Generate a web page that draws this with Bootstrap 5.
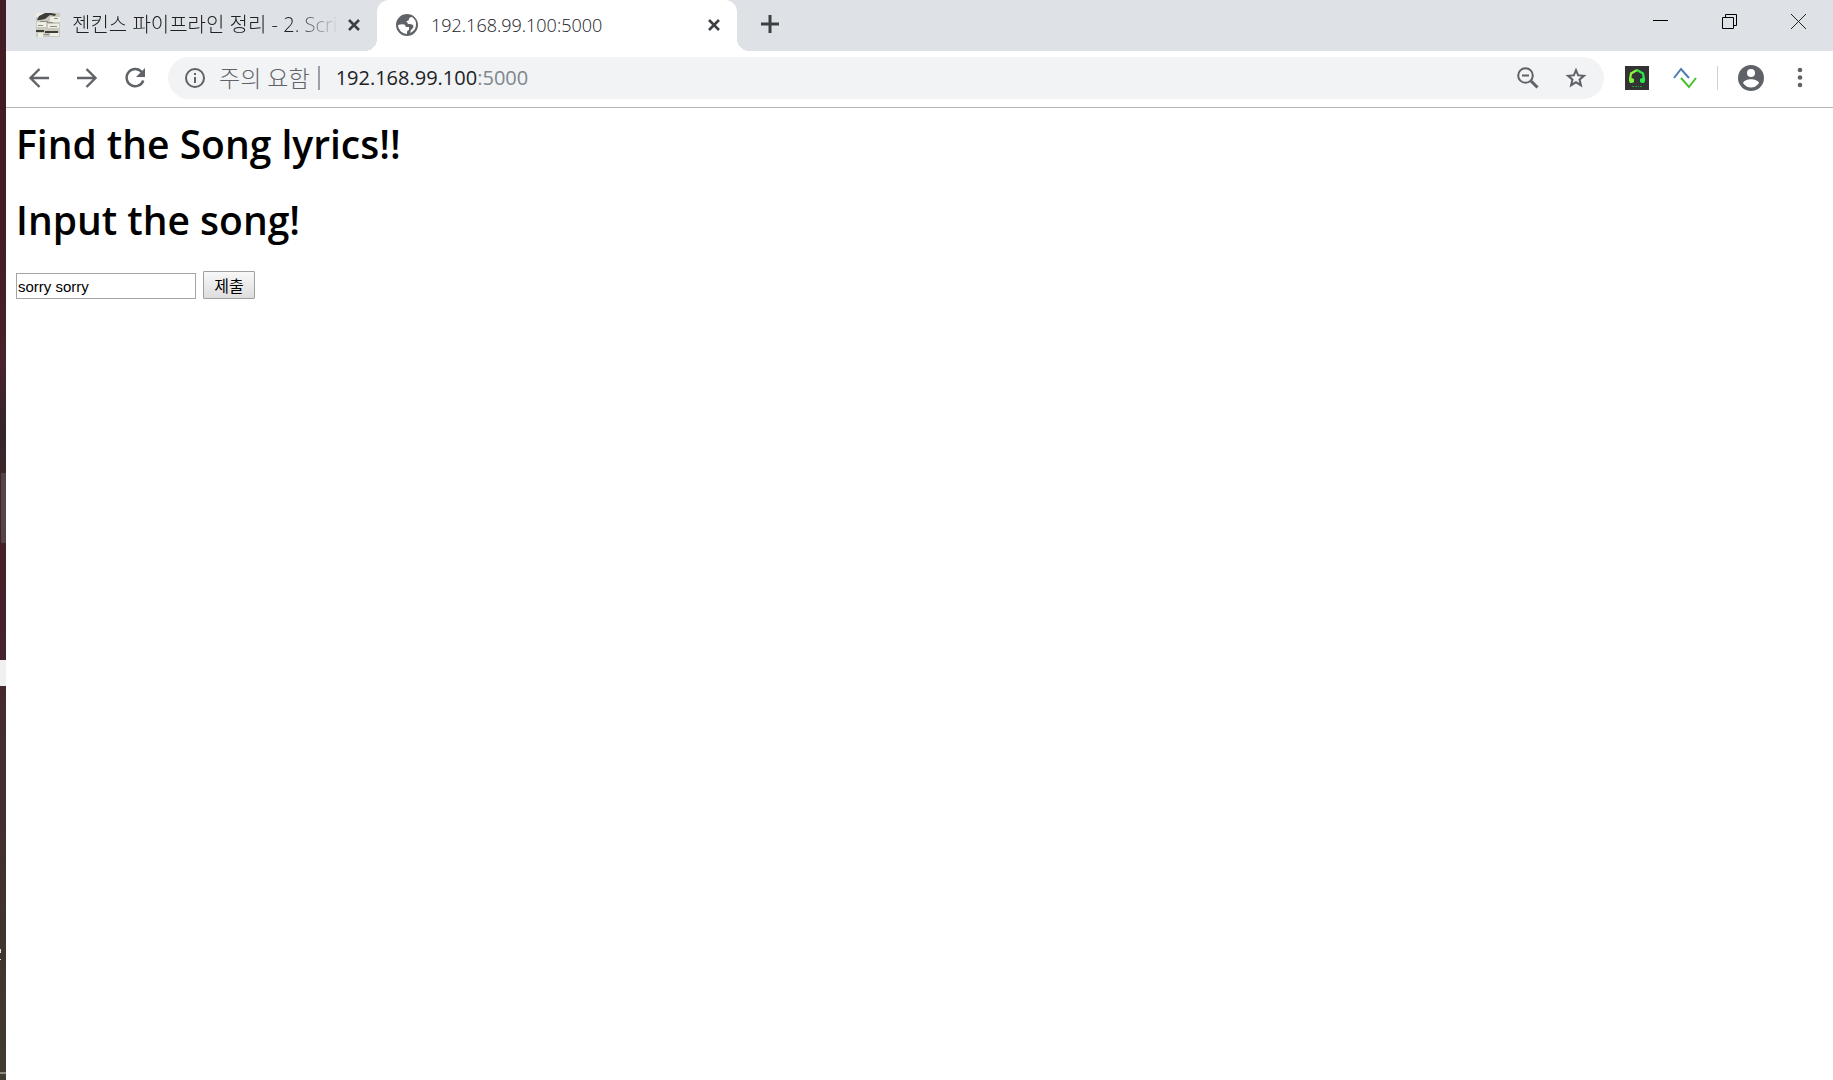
<!DOCTYPE html>
<html lang="ko">
<head>
<meta charset="utf-8">
<meta name="viewport" content="width=device-width, initial-scale=1">
<title>192.168.99.100:5000</title>
<link rel="stylesheet" href="https://cdn.jsdelivr.net/npm/bootstrap@5.3.0/dist/css/bootstrap.min.css">
<style>
body{font-family:"Open Sans","Noto Sans CJK KR",sans-serif;color:#000}
svg{display:block;flex-shrink:0}
button{background:none;border:0;padding:0}
/* sliver of the desktop behind the window */
.desk{width:6px;background:linear-gradient(#431d24 0,#431d24 22%,#48222c 34%,#33252a 40%,#3c272a 44%,#452028 50%,#45202b 58%,#452b2f 66%,#42302e 80%,#3f352f 88%,#413b32 100%)}
.desk svg{width:6px;height:100%}
.tabstrip{height:51px;background:#dee1e6;padding-left:12px}
.tab{width:359px;height:51px;font-size:18px;font-weight:300;color:#202124;padding:0 17px 2px 18px}
.tab-on{position:relative;width:360px;background:#fff;border-radius:12px 12px 0 0}
.tab-on::before,.tab-on::after{content:"";position:absolute;bottom:0;width:12px;height:12px}
.tab-on::before{right:100%;background:radial-gradient(circle at 0 0,transparent 12px,#fff 12px)}
.tab-on::after{left:100%;background:radial-gradient(circle at 100% 0,transparent 12px,#fff 12px)}
.tab-text{margin-left:12px;line-height:28px;white-space:nowrap;flex:1}
.tab-fade{-webkit-mask-image:linear-gradient(90deg,#000 82%,transparent);mask-image:linear-gradient(90deg,#000 82%,transparent)}
.ko-title{font-size:20px}
.wctl button{width:69px;height:43px;display:flex;align-items:center;justify-content:center}
.toolbar{height:57px;background:#fff;border-bottom:1px solid #b4b4b4;padding:0 21px 2px;color:#5f6368}
.omni{height:42px;background:#f1f3f4;border-radius:21px;padding:0 16px 0 17px;margin:0 21px}
.warn{font-size:23px;font-weight:300;line-height:30px;margin-left:14px}
.vbar{width:2px;height:24px;background:#9aa0a6}
.vbar-thin{width:1px;height:24px;background:#cfd1d4;margin:0 20px}
.url{font-size:20px;line-height:30px;color:#202124;text-decoration:none}
.url span{color:#80868b}
.page{padding:8px 10px}
.page h1{font-size:39px;line-height:56px;font-weight:600;margin:0 0 20px}
.song-form{padding-top:3px;gap:7px}
.song{width:180px;height:26px;border:1px solid #a5a5a5;padding:1px;font-family:"Liberation Sans",sans-serif;font-size:15px;color:#000;border-radius:0}
.send{width:52px;height:28px;border:1px solid #a0a0a0;border-radius:1px;background:linear-gradient(#f8f8f8,#ddd);font-size:16px;line-height:24px;color:#000;font-family:"Noto Sans CJK KR",sans-serif}
</style>
</head>
<body class="bg-white">
<div class="d-flex min-vh-100">
  <div class="desk flex-shrink-0">
    <svg viewBox="0 0 6 1080" preserveAspectRatio="none">
      <path d="M1 473h5v70H1z" fill="#574449"/>
      <path d="M0 660h6v26H0z" fill="#f0f0f0"/>
      <path d="M0 949h1v4H0zM0 959h1v1H0z" fill="#ddd"/>
      <path d="M0 1072h6v2H0z" fill="#8c8983"/>
    </svg>
  </div>
  <div class="flex-grow-1">
    <header>
      <div class="tabstrip d-flex">
        <div class="tab d-flex align-items-center">
          <svg width="24" height="24" viewBox="0 0 24 24"><path fill="#c9c9bd" d="M0 0h24v24H0z"/><path fill="#eeeee6" d="M0 0h9v4H0zM14 4h10v5H14zM1 9h9v5H1zM12 11h11v4H12zM2 20h5v4H2zM14 20h9v3h-9z"/><path fill="#3d3d3a" d="M3 3l6-3h6l5 1-1 2-5-1-5 4-5 1H1zM0 17h8v2H0zM9 18h13v2H9z"/><path fill="#8d8d80" d="M4 8h8v1H4zM11 9h6v1h-6zM2 12h5v1H2zM14 13h7v1h-7zM8 21h5v1H8zM18 5h4v1h-4z"/></svg>
          <span class="tab-text tab-fade ko-title">젠킨스 파이프라인 정리 - 2. Scri</span>
          <button class="ms-2" aria-label="탭 닫기"><svg width="12" height="12" viewBox="0 0 12 12" stroke="#3c4043" stroke-width="2.6"><path d="M1 1l10 10M11 1L1 11"/></svg></button>
        </div>
        <div class="tab tab-on d-flex align-items-center">
          <svg width="24" height="24" viewBox="0 0 24 24" fill="#5f6368"><path d="M12 1a11 11 0 1 0 0 22 11 11 0 0 0 0-22zM3 12c3-1 6-1 7 0 1 1 0 2 1 2h3v3c-1 0-2 1-2 2v2A9 9 0 0 1 3 12zm12 8c1-1 0-3 2-4 1-1 2-2 1-4-1-1-3-1-4-1-2 0-1-2-3-3 1 0 3 0 3-2 0-1 1-2 3-2a9 9 0 0 1-2 16z" fill-rule="evenodd"/></svg>
          <span class="tab-text">192.168.99.100:5000</span>
          <button class="ms-2" aria-label="탭 닫기"><svg width="12" height="12" viewBox="0 0 12 12" stroke="#3c4043" stroke-width="2.6"><path d="M1 1l10 10M11 1L1 11"/></svg></button>
        </div>
        <button class="px-4 pb-1" aria-label="새 탭"><svg width="18" height="18" viewBox="0 0 18 18" stroke="#3c4043" stroke-width="3"><path d="M9 0v18M0 9h18"/></svg></button>
        <div class="wctl d-flex ms-auto">
          <button aria-label="최소화"><svg width="15" height="15" viewBox="0 0 15 15"><path fill="#000" d="M0 6h15v1H0z"/></svg></button>
          <button aria-label="이전 크기로"><svg width="15" height="15" viewBox="0 0 15 15" fill="none" stroke="#000"><path d="M.5 3.500h11v11H.5zM3.500 3.500v-3h11v11h-3"/></svg></button>
          <button aria-label="닫기"><svg width="15" height="15" viewBox="0 0 15 15" stroke="#222"><path d="M0 0l15 15M15 0L0 15"/></svg></button>
        </div>
      </div>
      <div class="toolbar d-flex align-items-center">
        <div class="d-flex gap-4">
          <button aria-label="뒤로"><svg width="24" height="24" viewBox="0 0 24 24" fill="none" stroke="#5f6368" stroke-width="2.400"><path d="M22 12H4M12.500 3L3.500 12l9 9"/></svg></button>
          <button aria-label="앞으로"><svg width="24" height="24" viewBox="0 0 24 24" fill="none" stroke="#5f6368" stroke-width="2.400"><path d="M2 12h18M11.500 3l9 9-9 9"/></svg></button>
          <button aria-label="새로고침"><svg width="24" height="24" viewBox="0 0 24 24"><path fill="none" stroke="#5f6368" stroke-width="2.400" d="M18.700 6A8.600 8.600 0 1 0 20.300 14.500"/><path fill="#5f6368" d="M22 2v9h-9z"/></svg></button>
        </div>
        <div class="omni d-flex align-items-center flex-grow-1">
          <svg width="20" height="20" viewBox="0 0 20 20"><circle cx="10" cy="10" r="9" fill="none" stroke="#5f6368" stroke-width="2"/><path fill="#5f6368" d="M9 9h2v6H9zM9 5h2v2H9z"/></svg>
          <span class="warn">주의 요함</span>
          <span class="vbar ms-2 me-3"></span>
          <a class="url" href="#">192.168.99.100<span>:5000</span></a>
          <div class="d-flex gap-4 ms-auto">
            <button aria-label="축소"><svg width="24" height="24" viewBox="0 0 24 24" fill="none" stroke="#5f6368" stroke-width="2"><circle cx="9.500" cy="9.500" r="7.300"/><path d="M6 9.500h7"/><path stroke-width="3" d="M15 15l6.500 6.500"/></svg></button>
            <button aria-label="북마크"><svg width="24" height="24" viewBox="0 0 24 24" fill="#5f6368" fill-rule="evenodd"><path d="M12 1.500l2.900 7 7.600.6-5.800 5 1.800 7.400-6.500-3.900-6.500 3.900 1.800-7.400-5.800-5 7.600-.6zM12 6.700l-1.500 3.600-3.900.3 3 2.600-.9 3.800 3.300-2 3.300 2-.9-3.800 3-2.600-3.900-.3z"/></svg></button>
          </div>
        </div>
        <div class="d-flex align-items-center">
          <button class="me-4" aria-label="음악"><svg width="24" height="24" viewBox="0 0 24 24"><path fill="#333" d="M0 0h24v24H0z"/><path fill="none" stroke="#8cf53c" stroke-width="2.200" d="M12 4L6 7.500l-1 6"/><path fill="none" stroke="#2be84a" stroke-width="2.200" d="M12 4l6 3.500 1 6"/><path fill="#7df23c" d="M4 12h3l2 1v3l-2 1H5l-1-2z"/><path fill="#2be84a" d="M20 12h-3l-2 1v3l2 1h2l1-2z"/><path fill="#219a38" d="M7 20h2v1H7zM10 20h2v1h-2zM13 20h1v1h-1zM15 20h2v1h-2z"/></svg></button>
          <button aria-label="확장"><svg width="24" height="24" viewBox="0 0 24 24" fill="none" stroke-width="2"><path stroke="#4d7db3" d="M1 12l7-9 8 9"/><path stroke="#45c12d" d="M8 12l8 9 7-9"/></svg></button>
          <span class="vbar-thin"></span>
          <button class="me-4" aria-label="프로필"><svg width="26" height="26" viewBox="0 0 26 26"><circle cx="13" cy="13" r="13" fill="#5f6368"/><circle cx="13" cy="8" r="4" fill="#fff"/><path fill="#fff" d="M5 18c2-5 14-5 16 0a9.500 9.500 0 0 1-16 0z"/></svg></button>
          <button aria-label="메뉴"><svg width="24" height="24" viewBox="0 0 24 24" fill="#5f6368"><circle cx="12" cy="4" r="2.300"/><circle cx="12" cy="11.500" r="2.300"/><circle cx="12" cy="19" r="2.300"/></svg></button>
        </div>
      </div>
    </header>
    <main class="page">
      <h1>Find the Song lyrics!!</h1>
      <h1>Input the song!</h1>
      <form class="song-form d-flex align-items-end">
        <input class="song" type="text" value="sorry sorry" aria-label="song">
        <button class="send" type="submit">제출</button>
      </form>
    </main>
  </div>
</div>
<script src="https://cdn.jsdelivr.net/npm/bootstrap@5.3.0/dist/js/bootstrap.bundle.min.js"></script>
</body>
</html>
